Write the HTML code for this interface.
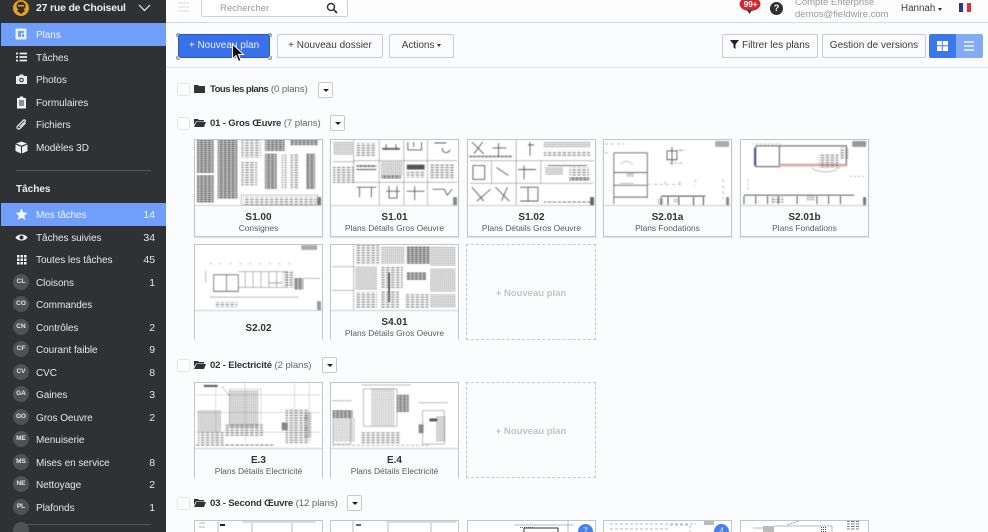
<!DOCTYPE html>
<html lang="fr"><head><meta charset="utf-8"><title>Plans</title>
<style>
*{box-sizing:border-box}
html,body{margin:0;padding:0;width:988px;height:532px;overflow:hidden}
body{position:relative;background:#fbfcfe;font-family:"Liberation Sans",sans-serif;color:#3a3a3c}
#wrap{position:absolute;left:0;top:0;width:988px;height:532px;overflow:hidden;background:#fbfcfe}
.a{position:absolute;white-space:nowrap}
#side{position:absolute;left:0;top:0;width:166px;height:532px;background:#303133;color:#e6e6e6;overflow:hidden}
.r{position:absolute;left:1px;width:165px;height:23px;line-height:25px;font-size:10px;letter-spacing:-.05px}
.r .l{position:absolute;left:35px;top:0}
.r .n{position:absolute;right:11px;top:0;font-size:10.5px}
.r.on{background:#6f9ffb;color:#eef4ff}
.c{position:absolute;left:12px;top:3px;width:16px;height:16px;border-radius:50%;background:#505154;color:#e8e8e8;font-size:6.5px;font-weight:bold;text-align:center;line-height:15px;letter-spacing:0}
.ic{position:absolute;left:14px;top:5px;width:13px;height:13px}
.btn{position:absolute;top:34px;height:24px;border:1px solid #c9cbce;border-radius:2px;background:#fcfcfd;font-size:10px;line-height:22px;text-align:center;color:#3c3c3e;white-space:nowrap}
.chk{position:absolute;left:177px;width:13px;height:13px;border:1px solid #e3e5e8;border-radius:3px;background:#fff}
.h{position:absolute;left:210px;font-size:9.6px;line-height:14px;white-space:nowrap;color:#666;letter-spacing:-.05px}
.h b{color:#333;letter-spacing:-.2px}
.dd{position:absolute;width:15px;height:16px;border:1px solid #c6c8cb;border-radius:2px;background:#fff}
.dd:after{content:"";position:absolute;left:4px;top:6px;border:3px solid transparent;border-top:3px solid #222;border-bottom:0}
.card{position:absolute;width:129px;height:98px;border:1px solid #c3c5c7;background:#fbfcfe;box-shadow:0 1px 1px #ddd;overflow:hidden}
.card.cut{height:96px;border-bottom:0;box-shadow:none}
.card.end{height:12px;border-bottom:0;box-shadow:none}
.card svg{position:absolute;left:0;top:0;width:127px;height:66px;background:#fff;border-bottom:1px solid #ccc;display:block;filter:blur(.4px)}
.card.end svg{height:11px;border-bottom:0;filter:none}
.bdg{position:absolute;left:110px;top:3px;width:15px;height:8px;border-radius:8px 8px 0 0;background:#4a7ee8;color:#dde8ff;font-size:9px;text-align:center;line-height:15px;overflow:hidden}
.t1{position:absolute;left:0;right:0;top:72px;text-align:center;font-size:10px;font-weight:bold;color:#333;line-height:11px}
.t2{position:absolute;left:0;right:0;top:83px;text-align:center;font-size:8.4px;color:#5c5c5e;line-height:11px;white-space:nowrap}
.new{position:absolute;width:130px;border:1px dashed #c8c8c8;color:#c4c4c4;font-size:9.5px;font-weight:bold;text-align:center}
.lg{stroke:#777;stroke-width:.5;fill:none}
.dk{stroke:#444;stroke-width:.8;fill:none}
</style></head><body><div id="wrap">
<svg width="0" height="0" style="position:absolute"><defs>
<pattern id="p" width="4" height="2" patternUnits="userSpaceOnUse"><rect width="3.4" height="1.1" fill="#333"/></pattern>
<pattern id="q" width="5" height="2.5" patternUnits="userSpaceOnUse"><rect width="3.6" height=".9" fill="#666"/></pattern>
<pattern id="g" width="2" height="2" patternUnits="userSpaceOnUse"><rect width="1" height="1" fill="#555"/></pattern>
</defs></svg>

<div id="side">
 <svg class="a" style="left:12px;top:0" width="18" height="16" viewBox="0 0 18 16"><circle cx="9" cy="8" r="8" fill="#e3a32c"/><circle cx="9" cy="6" r="4.5" fill="#3a3026"/><path d="M5 11l4 3 4-3-2-2H7z" fill="#3a3026"/><path d="M6 5h6v1.5H6z" fill="#e3a32c"/></svg>
 <div class="a" style="left:36px;top:1px;font-size:10.5px;font-weight:bold;color:#eee;line-height:14px;letter-spacing:-.2px">27 rue de Choiseul</div>
 <svg class="a" style="left:138px;top:4px" width="13" height="8"><path d="M1 1l5.5 5.5L12 1" stroke="#eee" stroke-width="1.2" fill="none"/></svg>

 <div class="r on" style="top:23px"><svg class="ic" viewBox="0 0 13 13" style="left:14px"><rect x=".5" y=".5" width="11" height="11" rx="1" fill="#e9f0ff"/><path d="M3 3h6v2H6v4H3zM7 6h2v3H7z" fill="#6f9ffb"/></svg><span class="l">Plans</span></div>
 <div class="r" style="top:46px"><svg class="ic" viewBox="0 0 13 13"><path d="M1 2.5h2M1 6h2M1 9.500h2M4.500 2.500h7.500M4.500 6h7.500M4.500 9.500h7.500" stroke="#eee" stroke-width="1.8"/></svg><span class="l">Tâches</span></div>
 <div class="r" style="top:68px"><svg class="ic" viewBox="0 0 13 13"><path d="M1 3h3l1-1.500h3L9 3h3v8H1z" fill="#eee"/><circle cx="6.500" cy="7" r="2.300" fill="#303133"/><circle cx="6.500" cy="7" r="1.200" fill="#eee"/></svg><span class="l">Photos</span></div>
 <div class="r" style="top:91px"><svg class="ic" viewBox="0 0 13 13"><path d="M2 2h2.500l.5-1.500h3L8.500 2H11v10.500H2z" fill="#eee"/><path d="M4 5h5M4 7h5M4 9h5" stroke="#303133"/></svg><span class="l">Formulaires</span></div>
 <div class="r" style="top:113px"><svg class="ic" viewBox="0 0 13 13"><path d="M10.500 5L5 10.500c-2 1.500-3.800-.5-2.500-2.300l6-6c1-1 2.500.5 1.500 1.500L4.500 9" stroke="#eee" stroke-width="1.200" fill="none"/></svg><span class="l">Fichiers</span></div>
 <div class="r" style="top:136px"><svg class="ic" viewBox="0 0 13 13"><path d="M6.500 .5l5.500 2-5.500 2.200L1 2.500zM.5 3.500l5.500 2.200v6.800L.5 10zM12.500 3.500L7 5.700v6.800l5.500-2.500z" fill="#eee"/></svg><span class="l">Modèles 3D</span></div>
 <div class="a" style="left:16px;top:170px;width:135px;height:1px;background:#55565a"></div>
 <div class="a" style="left:16px;top:183px;font-size:10px;font-weight:bold;color:#eee;line-height:13px">Tâches</div>
 <div class="r on" style="top:203px"><svg class="ic" viewBox="0 0 13 13"><path d="M6.500 .5l1.800 4 4.200.4-3.200 2.800 1 4.300-3.800-2.300-3.800 2.300 1-4.300L.5 4.900l4.200-.4z" fill="#f2f6ff"/></svg><span class="l">Mes tâches</span><span class="n">14</span></div>
 <div class="r" style="top:226px"><svg class="ic" viewBox="0 0 13 13"><path d="M.5 6.500C3 2.500 10 2.500 12.500 6.500 10 10.500 3 10.500.5 6.500z" fill="#eee"/><circle cx="6.500" cy="6.500" r="2" fill="#303133"/></svg><span class="l">Tâches suivies</span><span class="n">34</span></div>
 <div class="r" style="top:248px"><svg class="ic" viewBox="0 0 13 13"><path d="M2 2h2.500v2.500H2zM5.500 2H8v2.500H5.500zM9 2h2.500v2.500H9zM2 5.500h2.500V8H2zM5.500 5.500H8V8H5.500zM9 5.500h2.500V8H9zM2 9h2.500v2.500H2zM5.500 9H8v2.500H5.500zM9 9h2.500v2.500H9z" fill="#eee"/></svg><span class="l">Toutes les tâches</span><span class="n">45</span></div>
 <div class="r" style="top:271px"><span class="c">CL</span><span class="l">Cloisons</span><span class="n">1</span></div>
 <div class="r" style="top:293px"><span class="c">CO</span><span class="l">Commandes</span></div>
 <div class="r" style="top:316px"><span class="c">CN</span><span class="l">Contrôles</span><span class="n">2</span></div>
 <div class="r" style="top:338px"><span class="c">CF</span><span class="l">Courant faible</span><span class="n">9</span></div>
 <div class="r" style="top:361px"><span class="c">CV</span><span class="l">CVC</span><span class="n">8</span></div>
 <div class="r" style="top:383px"><span class="c">GA</span><span class="l">Gaines</span><span class="n">3</span></div>
 <div class="r" style="top:406px"><span class="c">GO</span><span class="l">Gros Oeuvre</span><span class="n">2</span></div>
 <div class="r" style="top:428px"><span class="c">ME</span><span class="l">Menuiserie</span></div>
 <div class="r" style="top:451px"><span class="c">MS</span><span class="l">Mises en service</span><span class="n">8</span></div>
 <div class="r" style="top:473px"><span class="c">NE</span><span class="l">Nettoyage</span><span class="n">2</span></div>
 <div class="r" style="top:496px"><span class="c">PL</span><span class="l">Plafonds</span><span class="n">1</span></div>
 <div class="a" style="left:13px;top:522px;width:16px;height:10px;border-radius:8px 8px 0 0;background:#505154"></div>
 <div class="a" style="left:16px;top:524px;width:135px;height:1px;background:#55565a"></div>
</div>

<!-- top bar -->
<div class="a" style="left:166px;top:0;width:822px;height:23px;background:#fdfdfe;border-bottom:1px solid #d9dadc"></div>
<svg class="a" style="left:178px;top:2px" width="12" height="10"><path d="M0 1h11M0 5h11M0 9h11" stroke="#dcdcdc"/></svg>
<div class="a" style="left:201px;top:-2px;width:147px;height:19px;border:1px solid #cfd0d2;border-radius:2px;background:#fff"></div>
<div class="a" style="left:220px;top:1px;font-size:9.5px;line-height:14px;color:#9a9a9c;padding-top:1px">Rechercher</div>
<svg class="a" style="left:326px;top:2px" width="12" height="12" viewBox="0 0 12 12"><circle cx="5" cy="5" r="3.500" stroke="#333" stroke-width="1.500" fill="none"/><path d="M7.500 7.500l3.500 3.500" stroke="#333" stroke-width="1.800"/></svg>
<svg class="a" style="left:739px;top:0" width="23" height="15" viewBox="0 0 23 15"><ellipse cx="11" cy="4" rx="10.500" ry="7" fill="#d0282e"/><path d="M8 10h5l-2.500 4z" fill="#333"/></svg>
<div class="a" style="left:740px;top:-1px;width:21px;text-align:center;font-size:8.500px;font-weight:bold;color:#fff;line-height:11px;letter-spacing:-.2px">99+</div>
<div class="a" style="left:770px;top:2px;width:13px;height:13px;border-radius:50%;background:#2f2f31;color:#fff;font-size:9.500px;font-weight:bold;text-align:center;line-height:13px">?</div>
<div class="a" style="left:795px;top:-3px;font-size:9.500px;line-height:11px;color:#9a9a9c">Compte Enterprise</div>
<div class="a" style="left:795px;top:9px;font-size:9.500px;line-height:11px;color:#9a9a9c">demos@fieldwire.com</div>
<div class="a" style="left:901px;top:3px;font-size:9.800px;line-height:12px;color:#3e3e40">Hannah</div>
<div class="a" style="left:938px;top:8px;border:2.500px solid transparent;border-top:3px solid #333;border-bottom:0"></div>
<div class="a" style="left:959px;top:3px;width:12px;height:9px;background:linear-gradient(90deg,#2b3a7c 0 33%,#eef 33% 66%,#d5333b 66%)"></div>

<!-- toolbar -->
<div class="a" style="left:166px;top:67px;width:822px;height:1px;background:#e2e3e5"></div>
<div class="btn" style="left:178px;width:92px;background:#3a71ea;border-color:#2559c8;border-radius:3px;color:#e9f0ff;font-size:10px">+ Nouveau plan</div>
<div class="btn" style="left:277px;width:106px">+ Nouveau dossier</div>
<div class="btn" style="left:389px;width:65px">Actions <span style="display:inline-block;border:2.500px solid transparent;border-top:3px solid #333;border-bottom:0;vertical-align:middle"></span></div>
<div class="btn" style="left:722px;width:96px"><svg width="9" height="9" viewBox="0 0 9 9" style="vertical-align:-1px"><path d="M0 0h9L5.500 4.500V9L3.500 7.500v-3z" fill="#222"/></svg> Filtrer les plans</div>
<div class="btn" style="left:822px;width:104px">Gestion de versions</div>
<div class="a" style="left:929px;top:34px;width:27px;height:24px;background:#3d75ea;border-radius:2px 0 0 2px"></div>
<div class="a" style="left:956px;top:34px;width:27px;height:24px;background:#83abf5;border-radius:0 2px 2px 0"></div>
<svg class="a" style="left:937px;top:41px" width="11" height="10"><path d="M0 0h4.800v4.300H0zM5.700 0H11v4.300H5.700zM0 5.300h4.800V10H0zM5.700 5.300H11V10H5.700z" fill="#fff"/></svg>
<svg class="a" style="left:964px;top:41px" width="11" height="10"><path d="M0 1h10M0 5h10M0 9h10" stroke="#f1f6ff" stroke-width="1.500"/></svg>

<!-- headers -->
<div class="chk" style="top:83px"></div>
<svg class="a" style="left:194px;top:84px" width="11" height="9"><path d="M0 1h4l1 1h6v7H0z" fill="#333"/></svg>
<div class="h" style="top:83px"><b style="letter-spacing:-.55px">Tous les plans</b> (0 plans)</div>
<div class="dd" style="left:318px;top:82px"></div>

<div class="chk" style="top:117px"></div>
<svg class="a" style="left:194px;top:118px" width="12" height="9"><path d="M0 1h4l1 1h5v1.500H2L0 7zM2.500 4H12l-2 5H0z" fill="#333"/></svg>
<div class="h" style="top:117px"><b>01 - Gros Œuvre</b> (7 plans)</div>
<div class="dd" style="left:330px;top:115px"></div>

<div class="chk" style="top:359px"></div>
<svg class="a" style="left:194px;top:360px" width="12" height="9"><path d="M0 1h4l1 1h5v1.500H2L0 7zM2.500 4H12l-2 5H0z" fill="#333"/></svg>
<div class="h" style="top:359px"><b>02 - Electricité</b> (2 plans)</div>
<div class="dd" style="left:322px;top:357px"></div>

<div class="chk" style="top:497px"></div>
<svg class="a" style="left:194px;top:498px" width="12" height="9"><path d="M0 1h4l1 1h5v1.500H2L0 7zM2.500 4H12l-2 5H0z" fill="#333"/></svg>
<div class="h" style="top:497px"><b>03 - Second Œuvre</b> (12 plans)</div>
<div class="dd" style="left:347px;top:495px"></div>

<!-- row 1 -->
<div class="card" style="left:194px;top:139px"><svg viewBox="0 0 127 66">
<rect x="1" y="0" width="17" height="34" fill="url(#p)"/><rect x="1" y="36" width="17" height="28" fill="url(#p)"/>
<rect x="22" y="0" width="20" height="60" fill="url(#p)"/><rect x="46" y="0" width="20" height="18" fill="url(#q)"/><rect x="46" y="22" width="16" height="24" fill="url(#q)"/>
<rect x="70" y="0" width="20" height="11" fill="url(#p)"/><rect x="70" y="14" width="12" height="36" fill="url(#p)"/><rect x="87" y="14" width="5" height="36" fill="url(#q)"/><rect x="96" y="14" width="8" height="36" fill="url(#q)"/><rect x="112" y="14" width="9" height="36" fill="url(#p)"/>
<rect x="96" y="0" width="28" height="5" fill="url(#p)"/><rect x="48" y="58" width="74" height="8" fill="url(#q)"/><rect x="46" y="56" width="78" height="10" fill="none" stroke="#888" stroke-width=".5"/><rect x="123" y="58" width="4" height="8" fill="#777"/></svg>
<div class="t1">S1.00</div><div class="t2">Consignes</div></div>

<div class="card" style="left:330px;top:139px"><svg viewBox="0 0 127 66">
<path class="lg" d="M22 0v44M48 0v66M73 0v66M97 0v66M1 22h22M22 21h105M22 43h105"/>
<rect x="1" y="2" width="20" height="13" fill="url(#g)"/><rect x="1" y="27" width="21" height="17" fill="url(#q)"/>
<rect x="25" y="3" width="20" height="14" fill="url(#q)"/><rect x="25" y="25" width="20" height="3" fill="url(#p)"/><path class="dk" d="M25 30h20M28 48v10M40 48v10M25 48h20"/>
<rect x="51" y="8" width="18" height="2" fill="#666"/><path class="dk" d="M55 4v6M65 4v6"/><rect x="50" y="22" width="22" height="13" fill="url(#g)"/><rect x="50" y="36" width="20" height="3" fill="url(#p)"/><path class="dk" d="M58 47v12h8v-12M55 52h14"/>
<path class="dk" d="M77 2v8h14V2M83 2v5"/><rect x="76" y="25" width="18" height="5" fill="#555"/><rect x="76" y="32" width="18" height="6" fill="url(#q)"/><path class="dk" d="M84 47v14M76 52h18"/>
<path class="dk" d="M104 3h12M112 8c0 6 6 6 8 2"/><rect x="100" y="24" width="24" height="16" fill="url(#q)"/><path class="dk" d="M102 50h12l3 6 5-6"/><rect x="123" y="58" width="4" height="8" fill="#888"/></svg>
<div class="t1">S1.01</div><div class="t2">Plans Détails Gros Oeuvre</div></div>

<div class="card" style="left:467px;top:139px"><svg viewBox="0 0 127 66">
<path class="lg" d="M1 21h47M23 21v23M48 0v66M73 21v23M1 44h47M48 21h79M48 44h78"/>
<path class="dk" d="M3 2l12 12M14 2L5 14M30 3v14M24 8h14M60 5h6M62 2v14"/><rect x="0" y="16" width="44" height="2" fill="url(#p)"/><rect x="76" y="2" width="47" height="6" fill="url(#g)"/><rect x="76" y="11" width="47" height="6" fill="url(#q)"/>
<path class="dk" d="M4 26h12v14H4zM28 28l12 8M56 26v14M50 30h18M80 26h40"/><rect x="77" y="28" width="18" height="7" fill="url(#g)"/><rect x="102" y="28" width="20" height="8" fill="url(#q)"/><rect x="102" y="38" width="20" height="3" fill="url(#p)"/>
<path class="dk" d="M3 48l12 14M8 62l14-12M27 48l14 14M33 62l6-14M52 48h18v14H52M60 48v14"/><rect x="76" y="62" width="50" height="3" fill="url(#q)"/><rect x="123" y="58" width="4" height="8" fill="#666"/></svg>
<div class="t1">S1.02</div><div class="t2">Plans Détails Gros Oeuvre</div></div>

<div class="card" style="left:603px;top:139px"><svg viewBox="0 0 127 66">
<rect x="112" y="1" width="14" height="6" fill="#aaa"/>
<path d="M9 13h34v46M9 13v52M9 33h34M9 46h34M9 58h34" stroke="#666" fill="none" stroke-width=".9"/><path class="lg" d="M16 25c3-5 9-4 12 0M15 44h14"/><rect x="22" y="34" width="8" height="3" fill="url(#g)"/>
<path class="dk" d="M63 11h10v9H63zM68 7v18"/><rect x="65" y="23" width="14" height="2" fill="url(#q)"/><rect x="73" y="10" width="8" height="2" fill="url(#q)"/>
<path d="M57 57h45M57 58v8M64 58v8M75 58v8M90 58v8M100 58v8" stroke="#444" stroke-width="1" fill="none"/><rect x="54" y="60" width="5" height="5" fill="url(#g)"/><rect x="70" y="60" width="4" height="4" fill="url(#g)"/>
<path class="lg" d="M0 4h20M0 13h4M44 45h34M76 42v6M61 42v6M92 40v7M120 40v20" stroke-dasharray="3 3"/><rect x="123" y="58" width="3" height="8" fill="#888"/></svg>
<div class="t1">S2.01a</div><div class="t2">Plans Fondations</div></div>

<div class="card" style="left:740px;top:139px"><svg viewBox="0 0 127 66">
<rect x="112" y="1" width="14" height="6" fill="#999"/>
<path d="M14 6h92v20H38M14 6v21h24V6" stroke="#555" stroke-width="1" fill="none"/>
<path d="M13 8v18" stroke="#3b4eb8" stroke-width="1.500"/><path d="M38 25h68" stroke="#d08585" stroke-width="1.500"/><path d="M38 26h68" stroke="#e3b5b5" stroke-width="2"/>
<rect x="78" y="14" width="20" height="14" fill="url(#q)"/><rect x="100" y="8" width="8" height="12" fill="url(#q)"/><path class="lg" d="M70 28c8 6 24 6 30-1"/>
<path d="M2 56h112M2 57v8M14 57v8M26 57v8M37 57v8M56 57v8M76 57v8M88 57v8M100 57v8" stroke="#444" stroke-width=".9" fill="none"/><rect x="30" y="58" width="12" height="6" fill="url(#q)"/><rect x="66" y="56" width="8" height="6" fill="url(#g)"/>
<path class="lg" d="M6 40v10M10 4h30M110 37h16" stroke-dasharray="2 2"/><rect x="123" y="58" width="3" height="8" fill="#777"/></svg>
<div class="t1">S2.01b</div><div class="t2">Plans Fondations</div></div>

<!-- row 2 -->
<div class="card cut" style="left:194px;top:244px"><svg viewBox="0 0 127 66">
<rect x="107" y="0" width="16" height="5" fill="#aaa"/>
<path d="M18 26h25v14H18zM31 26v14" stroke="#555" fill="none" transform="translate(0 -1) scale(1 1.200)" stroke-width=".7"/>
<path class="lg" d="M43 27h50v16H43M50 27v16M58 27v16M66 27v16M74 27v16M82 27v16"/><rect x="74" y="37" width="14" height="3" fill="url(#g)"/><rect x="88" y="26" width="12" height="17" fill="url(#q)"/><rect x="100" y="33" width="9" height="12" fill="url(#p)"/>
<path class="lg" d="M14 53h90M10 26v12M110 34h16"/><rect x="20" y="58" width="22" height="5" fill="url(#q)"/><path class="lg" d="M14 19h90" stroke-dasharray="2 8"/><rect x="123" y="57" width="4" height="9" fill="#999"/></svg>
<div class="t1" style="top:78px">S2.02</div></div>

<div class="card cut" style="left:330px;top:244px"><svg viewBox="0 0 127 66">
<path class="lg" d="M0 22h22M0 46h22M22 0v66"/>
<rect x="24" y="0" width="24" height="20" fill="url(#q)"/><rect x="50" y="1" width="24" height="18" fill="url(#g)"/><rect x="76" y="1" width="23" height="18" fill="url(#p)"/><rect x="100" y="1" width="26" height="20" fill="url(#g)"/>
<rect x="24" y="22" width="22" height="24" fill="url(#g)"/><rect x="50" y="22" width="22" height="22" fill="url(#q)"/><path d="M58 28v30" stroke="#333" stroke-width="1.500"/><rect x="76" y="28" width="20" height="8" fill="url(#p)"/><rect x="100" y="24" width="26" height="24" fill="url(#g)"/>
<rect x="24" y="48" width="22" height="16" fill="url(#q)"/><rect x="50" y="46" width="18" height="18" fill="url(#q)"/><rect x="74" y="50" width="24" height="14" fill="url(#q)"/><rect x="100" y="50" width="26" height="14" fill="url(#g)"/></svg>
<div class="t1" style="top:72px">S4.01</div><div class="t2">Plans Détails Gros Oeuvre</div></div>

<div class="new" style="left:466px;top:244px;height:96px;line-height:97px">+ Nouveau plan</div>

<!-- electricity -->
<div class="card cut" style="left:194px;top:382px"><svg viewBox="0 0 127 66">
<rect x="8" y="2" width="14" height="2" fill="#555"/><path class="lg" d="M26 3l8 10"/>
<path class="lg" d="M34 6h32v36H34zM0 12h127M0 30h127M0 50h127M20 0v60M50 0v60M100 0v60M115 0v60" opacity=".5"/>
<rect x="33" y="7" width="30" height="38" fill="url(#g)"/><rect x="2" y="28" width="24" height="22" fill="url(#g)"/><rect x="2" y="50" width="26" height="12" fill="url(#q)"/><rect x="30" y="42" width="38" height="12" fill="url(#q)"/>
<rect x="91" y="26" width="24" height="35" fill="url(#q)"/><rect x="87" y="40" width="6" height="8" fill="#888"/><rect x="110" y="30" width="7" height="26" fill="url(#g)"/><rect x="0" y="62" width="80" height="3" fill="url(#q)"/></svg>
<div class="t1">E.3</div><div class="t2">Plans Détails Electricité</div></div>

<div class="card cut" style="left:330px;top:382px"><svg viewBox="0 0 127 66">
<path class="lg" d="M32 6h34v38H32zM0 18h20M88 20h30M30 2h50"/>
<rect x="40" y="6" width="24" height="38" fill="url(#g)" opacity=".8"/><rect x="66" y="12" width="12" height="18" fill="url(#p)"/><rect x="1" y="28" width="20" height="8" fill="url(#p)"/><rect x="1" y="36" width="22" height="24" fill="url(#g)" opacity=".8"/><rect x="30" y="50" width="40" height="12" fill="url(#q)"/>
<path class="lg" d="M1 28h18v34H1zM92 28h22v34H92z"/><rect x="99" y="36" width="8" height="3" fill="#555"/><rect x="88" y="42" width="5" height="9" fill="#888"/><rect x="106" y="34" width="9" height="26" fill="url(#g)"/><rect x="0" y="63" width="100" height="2" fill="url(#q)"/></svg>
<div class="t1">E.4</div><div class="t2">Plans Détails Electricité</div></div>

<div class="new" style="left:466px;top:382px;height:96px;line-height:97px">+ Nouveau plan</div>

<!-- third section, cropped by the viewport -->
<div class="card end" style="left:194px;top:520px"><svg viewBox="0 0 127 11"><path class="lg" d="M47 1h74M57 2v9M97 2v9"/><rect x="25" y="3" width="5" height="2" fill="#222"/><path class="lg" d="M23 0v11M4 2h6M4 6h6"/></svg></div>
<div class="card end" style="left:330px;top:520px"><svg viewBox="0 0 127 11"><path class="lg" d="M55 1h70M57 2v9M100 2v9"/><rect x="25" y="3" width="5" height="2" fill="#666"/><path class="lg" d="M22 0v11"/></svg></div>
<div class="card end" style="left:467px;top:520px"><svg viewBox="0 0 127 11"><path d="M56 7h34v4M56 7v4" stroke="#333" fill="none"/><path class="lg" d="M46 4h60M100 0v11"/><rect x="52" y="6" width="14" height="2" fill="url(#g)"/></svg><div class="bdg">7</div></div>
<div class="card end" style="left:603px;top:520px"><svg viewBox="0 0 127 11"><path class="lg" d="M6 3h86M6 8h60M66 4h20v7" stroke-dasharray="3 2"/><rect x="100" y="0" width="10" height="4" fill="#bbb"/></svg><div class="bdg">4</div></div>
<div class="card end" style="left:740px;top:520px"><svg viewBox="0 0 127 11"><rect x="22" y="5" width="11" height="6" fill="#bbb"/><path class="lg" d="M33 5h58v6M46 4l12-4M12 7h10"/><rect x="79" y="6" width="7" height="5" fill="url(#g)"/><rect x="106" y="0" width="12" height="10" fill="url(#q)"/></svg></div>

<!-- focus corners + cursor -->
<svg class="a" style="left:176px;top:33px" width="96" height="27"><path d="M1 4V1h3M92 1h3v3M95 23v3h-3M4 26H1v-3" stroke="#345" fill="none" stroke-width=".8"/></svg>
<svg class="a" style="left:231px;top:43px" width="15" height="21" viewBox="0 0 15 21"><path d="M1.500 1v15l3.500-3.500 2.500 6 2.500-1-2.500-6h5z" fill="#111" stroke="#fff" stroke-width="1"/></svg>
</div></body></html>
